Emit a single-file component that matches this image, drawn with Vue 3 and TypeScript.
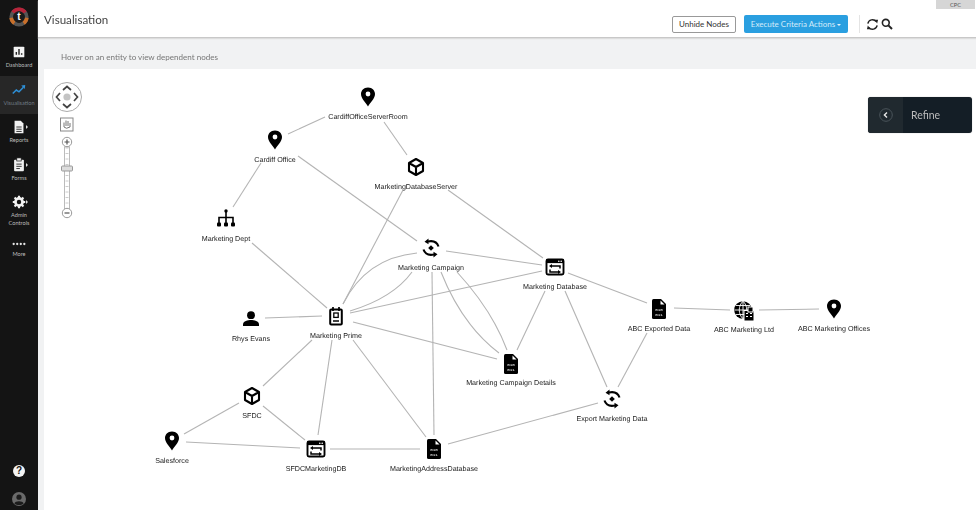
<script setup lang="ts">
// Dependency graph view: node and edge positions are page coordinates, see the svg viewBox
interface GraphNode {
  icon: string;
  x: number;
  y: number;
  label: string;
  ly: number;
}

const nodes: GraphNode[] = [
  { icon: 'pin', x: 368, y: 97, label: 'CardiffOfficeServerRoom', ly: 119 },
  { icon: 'pin', x: 275, y: 140, label: 'Cardiff Office', ly: 162 },
  { icon: 'box', x: 416, y: 167, label: 'MarketingDatabaseServer', ly: 189 },
  { icon: 'org', x: 226, y: 219, label: 'Marketing Dept', ly: 241 },
  { icon: 'cycle', x: 431, y: 248, label: 'Marketing Campaign', ly: 270 },
  { icon: 'window', x: 555, y: 267, label: 'Marketing Database', ly: 289 },
  { icon: 'person', x: 251, y: 319, label: 'Rhys Evans', ly: 341 },
  { icon: 'clip', x: 336, y: 316, label: 'Marketing Prime', ly: 338 },
  { icon: 'file', x: 511, y: 364, label: 'Marketing Campaign Details', ly: 385 },
  { icon: 'file', x: 659, y: 309, label: 'ABC Exported Data', ly: 331 },
  { icon: 'globe', x: 744, y: 311, label: 'ABC Marketing Ltd', ly: 332 },
  { icon: 'pin', x: 834, y: 309, label: 'ABC Marketing Offices', ly: 331 },
  { icon: 'cycle', x: 612, y: 399, label: 'Export Marketing Data', ly: 421 },
  { icon: 'box', x: 252, y: 396, label: 'SFDC', ly: 418 },
  { icon: 'pin', x: 172, y: 441, label: 'Salesforce', ly: 463 },
  { icon: 'window', x: 316, y: 449, label: 'SFDCMarketingDB', ly: 471 },
  { icon: 'file', x: 434, y: 449, label: 'MarketingAddressDatabase', ly: 471 },
];

const edges: string[] = [
  'M325 117L288 134',
  'M384 122L407 155',
  'M261 163L233 207',
  'M298 156L417 241',
  'M403 190L343 304',
  'M448 190L543 258',
  'M252 243L327 308',
  'M446 251L542 265',
  'M350 313L542 271',
  'M343 304Q366 258 417 253',
  'M350 311Q393 298 412 272',
  'M353 322L497 359',
  'M441 272Q462 325 499 353',
  'M457 272Q492 310 507 350',
  'M432 272L434 435',
  'M545 291L517 350',
  'M565 291L607 387',
  'M568 273L647 303',
  'M647 333L618 387',
  'M674 308L730 310',
  'M759 310L819 309',
  'M265 318L322 316',
  'M312 340L263 386',
  'M332 340L318 435',
  'M353 340L426 437',
  'M239 403L184 434',
  'M263 406L305 440',
  'M186 442L300 448',
  'M330 449L420 449',
  'M448 444L598 403',
];

const menu = [
  { name: 'dash', label: ['Dashboard'] },
  { name: 'vis', label: ['Visualisation'], active: true },
  { name: 'reports', label: ['Reports'], caret: true },
  { name: 'forms', label: ['Forms'], caret: true },
  { name: 'admin', label: ['Admin', 'Controls'], caret: true },
  { name: 'more', label: ['More'] },
];

const ruler = Array.from({ length: 11 }, (_, i) => 148 + i * 5.5);
</script>

<template>
  <div class="shell">
    <aside class="side">
      <svg class="logo" width="20" height="20" viewBox="-13 -13 26 26">
        <circle r="10" fill="none" stroke="#555" stroke-width="5" />
        <path d="M-8 -6A10 10 0 0 1 8 -6" fill="none" stroke="#b8233a" stroke-width="5" />
        <path d="M-10 1A10 10 0 0 0 -6 8" fill="none" stroke="#c9702b" stroke-width="5" />
        <path d="M10 1A10 10 0 0 1 6 8" fill="none" stroke="#c9702b" stroke-width="5" />
        <circle r="7.5" fill="#1b1b1b" />
        <text y="4.5" text-anchor="middle" class="logo-t">t</text>
      </svg>
      <nav class="menu">
        <a v-for="m in menu" :key="m.name" class="item" :class="[m.name, { active: m.active }]">
          <span class="glyph">
            <svg width="16" height="16" viewBox="-9 -9 18 18">
              <template v-if="m.name === 'dash'">
                <rect x="-6" y="-6" width="12" height="12" rx="1" fill="#f2f2f2" />
                <path d="M-3 3V0M0 3V-3.5M3 3V1.5" stroke="#222" stroke-width="1.6" />
              </template>
              <template v-else-if="m.name === 'vis'">
                <path d="M-7 4L-3 0L0 2L5 -3" fill="none" stroke="#2e8fd6" stroke-width="1.7" />
                <path d="M2.5 -5L7 -5.5L6.5 -1z" fill="#2e8fd6" />
              </template>
              <template v-else-if="m.name === 'reports'">
                <path d="M-5 -7H2L5 -4V7H-5z" fill="#f2f2f2" />
                <path d="M-3 0H3M-3 2.5H3M-3 5H3" stroke="#222" stroke-width="1" />
              </template>
              <template v-else-if="m.name === 'forms'">
                <rect x="-5.5" y="-6" width="11" height="13" rx="1" fill="#f2f2f2" />
                <rect x="-2.5" y="-8" width="5" height="3.5" fill="#f2f2f2" stroke="#141414" stroke-width=".8" />
                <path d="M-3 -1H3M-3 1.5H3M-3 4H1" stroke="#222" stroke-width="1" />
              </template>
              <template v-else-if="m.name === 'admin'">
                <circle r="4" fill="none" stroke="#f2f2f2" stroke-width="3" />
                <path
                  d="M0 -7V-4.5M0 7V4.5M-7 0H-4.5M7 0H4.5M-5 -5L-3.2 -3.2M5 5L3.2 3.2M-5 5L-3.2 3.2M5 -5L3.2 -3.2"
                  stroke="#f2f2f2"
                  stroke-width="2.4"
                />
              </template>
              <template v-else>
                <circle v-for="d in [-6, -2, 2, 6]" :key="d" :cx="d" cy="0" r="1.3" fill="#e5e5e5" />
              </template>
            </svg>
            <i v-if="m.caret" class="caret"></i>
          </span>
          <span v-for="line in m.label" :key="line" class="item-label">{{ line }}</span>
        </a>
      </nav>
      <div class="side-foot">
        <span class="help">?</span>
        <svg width="14" height="14" viewBox="-7 -7 14 14">
          <circle r="7" fill="#6a6a6a" />
          <circle cy="-1.8" r="2.6" fill="#1c1c1c" />
          <path d="M-4.6 4.6C-4 1.6 4 1.6 4.6 4.6C2 6.6 -2 6.6 -4.6 4.6z" fill="#1c1c1c" />
        </svg>
      </div>
    </aside>

    <main class="main">
      <header class="top">
        <h1>Visualisation</h1>
        <div class="tools">
          <button class="btn">Unhide Nodes</button>
          <button class="btn primary">Execute Criteria Actions <i class="down"></i></button>
          <span class="divider"></span>
          <span class="icons">
            <svg width="13" height="13" viewBox="-7 -7 14 14" fill="none" stroke="#222" stroke-width="1.5">
              <path d="M-5 -1A5 5 0 0 1 4 -3" />
              <path d="M5 1A5 5 0 0 1 -4 3" />
              <path d="M2 -5L6 -5L5 -1z M-2 5L-6 5L-5 1z" fill="#222" stroke="none" />
            </svg>
            <svg width="12" height="12" viewBox="0 0 12 12" fill="none" stroke="#222" stroke-width="1.6">
              <circle cx="4.8" cy="4.8" r="3.4" />
              <path d="M7.4 7.4L11 11" stroke-width="2" />
            </svg>
          </span>
        </div>
      </header>
      <span class="cpc">CPC</span>
      <p class="hint">Hover on an entity to view dependent nodes</p>

      <section class="canvas">
        <svg class="graph" width="932" height="441" viewBox="44 69 932 441">
          <defs>
            <symbol id="pin" viewBox="-10 -10 20 20" overflow="visible">
              <path d="M0 -9.5C-4.5 -9.5 -7 -6.2 -7 -3C-7 1.5 -2.2 5.5 0 9.5C2.2 5.5 7 1.5 7 -3C7 -6.2 4.5 -9.5 0 -9.5z" />
              <circle cy="-3" r="2.4" fill="#fff" />
            </symbol>
            <symbol id="box" viewBox="-10 -10 20 20" overflow="visible">
              <path
                d="M0 -8L7 -4V4L0 8L-7 4V-4zM-7 -4L0 0L7 -4M0 0V8"
                fill="none"
                stroke="#000"
                stroke-width="2.1"
                stroke-linejoin="round"
              />
            </symbol>
            <symbol id="org" viewBox="-10 -10 20 20" overflow="visible">
              <circle cy="-8" r="1.7" />
              <path d="M0 -8V4M-7 4V-1.5H7V4" fill="none" stroke="#000" stroke-width="1.6" />
              <rect x="-9" y="3.5" width="4" height="4" rx="1" />
              <rect x="-2" y="3.5" width="4" height="4" rx="1" />
              <rect x="5" y="3.5" width="4" height="4" rx="1" />
            </symbol>
            <symbol id="cycle" viewBox="-10 -10 20 20" overflow="visible">
              <path d="M0 -2.8L2.8 0L0 2.8L-2.8 0z" />
              <path d="M-3 -6.5C2 -7.5 6 -6 7.5 -1.5M3 6.5C-2 7.5 -6 6 -7.5 1.5" fill="none" stroke="#000" stroke-width="2.1" />
              <path d="M-2.5 -9.5L-6.5 -6.2L-2.5 -3.8zM2.5 9.5L6.5 6.2L2.5 3.8z" />
            </symbol>
            <symbol id="window" viewBox="-10 -10 20 20" overflow="visible">
              <rect x="-8.5" y="-7.5" width="17" height="15" rx="1.5" fill="#fff" stroke="#000" stroke-width="1.9" />
              <rect x="-8.5" y="-7.5" width="17" height="3.6" fill="#000" />
              <circle cx="3.8" cy="-5.8" r=".8" fill="#fff" />
              <circle cx="6.2" cy="-5.8" r=".8" fill="#fff" />
              <path d="M-3.5 -1H5V1.5M3.5 5H-5V2.5" fill="none" stroke="#000" stroke-width="1.5" />
              <path d="M-3 -3L-6 -1L-3 1zM3 3L6 5L3 7z" />
            </symbol>
            <symbol id="clip" viewBox="-10 -10 20 20" overflow="visible">
              <rect x="-5.8" y="-6.5" width="11.6" height="15" rx="1" fill="#fff" stroke="#000" stroke-width="2" />
              <path d="M-3 -9V-5M3 -9V-5" stroke="#000" stroke-width="1.7" />
              <rect x="-2.2" y="-3" width="4.4" height="4.4" fill="none" stroke="#000" stroke-width="1.3" />
              <path d="M-3 5H3" stroke="#000" stroke-width="1.5" />
            </symbol>
            <symbol id="file" viewBox="-10 -10 20 20" overflow="visible">
              <path d="M-7 -8.5Q-7 -10 -5.5 -10H2L7 -5V8.5Q7 10 5.5 10H-5.5Q-7 10 -7 8.5z" />
              <path d="M1.5 -8.5L5.5 -4.6H1.5z" fill="#fff" />
              <text x="0" y="1.5" class="bits">010</text>
              <text x="0" y="7" class="bits">011</text>
            </symbol>
            <symbol id="globe" viewBox="-10 -10 20 20" overflow="visible">
              <circle cx="-1" cy="-1" r="8.8" />
              <path
                d="M-9.5 -1H7.5M-1 -9.8V7.8M-8 -5.5H6M-8 3.5H6M-1 -9.8C-6 -5 -6 3 -1 7.8M-1 -9.8C4 -5 4 3 -1 7.8"
                fill="none"
                stroke="#fff"
                stroke-width=".9"
              />
              <rect x="0" y="-0.5" width="10" height="10.5" fill="#000" stroke="#fff" stroke-width="1" />
              <rect x="4" y="-4" width="5" height="5" fill="#000" stroke="#fff" stroke-width="1" />
              <path d="M2 2.5H4M6 2.5H8M2 5.5H4M6 5.5H8" stroke="#fff" stroke-width="1" />
            </symbol>
            <symbol id="person" viewBox="-10 -10 20 20" overflow="visible">
              <circle cy="-3.8" r="3.9" />
              <path d="M-8 7V5.5C-8 2 -3 1 0 1C3 1 8 2 8 5.5V7z" />
            </symbol>
          </defs>

          <path v-for="(d, i) in edges" :key="i" :d="d" class="edge" />
          <g v-for="n in nodes" :key="n.label">
            <use :href="'#' + n.icon" :x="n.x - 10" :y="n.y - 10" width="20" height="20" />
            <text :x="n.x" :y="n.ly" class="node-label">{{ n.label }}</text>
          </g>
        </svg>

        <svg class="pan" width="34" height="140" viewBox="50 80 34 140">
          <circle cx="67" cy="97" r="14.5" fill="#fff" stroke="#aaa" />
          <circle cx="67" cy="97" r="3.6" fill="#c4c4c4" />
          <path d="M63 90L67 86.5L71 90M63 104L67 107.5L71 104M60 93L56.5 97L60 101M74 93L77.5 97L74 101" fill="none" stroke="#444" stroke-width="1.7" />
          <rect x="60.5" y="118" width="12.5" height="13" fill="#fff" stroke="#888" />
          <path d="M64 127V122.5M66 126V120.5M68 126V121M70 127V123M64 127Q66 129.5 70 127" fill="none" stroke="#777" />
          <rect x="64.5" y="147" width="5" height="62" fill="#fff" stroke="#bbb" />
          <path v-for="t in ruler" :key="t" :d="`M65.5 ${t}H68.5`" stroke="#ccc" />
          <circle cx="67" cy="142" r="4.7" fill="#fff" stroke="#999" />
          <path d="M64.5 142H69.5M67 139.5V144.5" stroke="#555" stroke-width="1.2" />
          <rect x="61.5" y="166" width="11" height="5" rx="1" fill="#ddd" stroke="#999" />
          <circle cx="67" cy="213" r="4.7" fill="#fff" stroke="#999" />
          <path d="M64.5 213H69.5" stroke="#555" stroke-width="1.2" />
        </svg>

        <div class="refine">
          <span class="refine-toggle">
            <svg width="14" height="14" viewBox="-7 -7 14 14">
              <circle r="6.3" fill="none" stroke="#4a545a" />
              <path d="M1 -2.6L-1.6 0L1 2.6" fill="none" stroke="#e6e6e6" stroke-width="1.4" />
            </svg>
          </span>
          <span class="refine-label">Refine</span>
        </div>
      </section>
    </main>
  </div>
</template>

<style scoped>
.shell {
  display: flex;
  width: 976px;
  height: 510px;
  overflow: hidden;
  font-family: Lato, "Liberation Sans", sans-serif;
  color: #333;
  background: #f1f2f3;
}
.side {
  width: 38px;
  flex: none;
  display: flex;
  flex-direction: column;
  background: #141414;
  color: #bdbdbd;
}
.logo {
  align-self: center;
  margin: 7px 0 11px -1px;
}
.logo-t {
  font: 700 13px "Liberation Sans", sans-serif;
  fill: #fff;
}
.menu {
  display: flex;
  flex-direction: column;
}
.item {
  height: 38px;
  box-sizing: border-box;
  padding-top: 5px;
  display: flex;
  flex-direction: column;
  align-items: center;
}
.item.reports,
.item.forms,
.item.admin {
  padding-top: 4px;
}
.item.forms {
  height: 37px;
}
.item.admin {
  height: 46px;
}
.item.more {
  height: 26px;
  padding-top: 3.5px;
}
.item.more .glyph {
  height: 11px;
}
.item.active {
  background: #272727;
}
.glyph {
  position: relative;
  height: 18px;
  display: flex;
  align-items: center;
}
.caret {
  position: absolute;
  left: 15px;
  top: 7px;
  border: 2.5px solid transparent;
  border-left-color: #ddd;
  border-right-width: 0;
}
.item-label {
  font-size: 5.6px;
  line-height: 8px;
  white-space: nowrap;
}
.active .item-label {
  color: #6f7a84;
}
.side-foot {
  margin-top: auto;
  display: flex;
  flex-direction: column;
  align-items: center;
  gap: 15px;
  padding-bottom: 4px;
}
.help {
  width: 12px;
  height: 12px;
  border-radius: 50%;
  background: #f4f4f4;
  color: #141414;
  font: 700 10px/12px "Liberation Sans", sans-serif;
  text-align: center;
}
.main {
  position: relative;
  flex: 1;
  min-width: 0;
  display: flex;
  flex-direction: column;
}
.top {
  height: 38px;
  flex: none;
  box-sizing: border-box;
  display: flex;
  align-items: center;
  justify-content: space-between;
  padding: 0 83px 0 6px;
  background: #fff;
  border-bottom: 1px solid #c8c8c8;
  box-shadow: 0 1px 1px #ddd;
}
h1 {
  margin: 1px 0 0;
  font-size: 11.6px;
  font-weight: 400;
  color: #444;
  will-change: opacity;
}
.tools {
  display: flex;
  align-items: center;
  gap: 8px;
  padding-top: 11px;
}
.btn {
  height: 17px;
  width: 64px;
  padding: 0;
  font: 400 8px Lato, "Liberation Sans", sans-serif;
  color: #333;
  background: #fff;
  border: 1px solid #999;
  border-radius: 2px;
}
.btn.primary {
  height: 18px;
  width: 104px;
  color: #d5ecfa;
  background: #2a9fe0;
  border: 0;
}
.down {
  display: inline-block;
  vertical-align: middle;
  border: 2.5px solid transparent;
  border-top-color: #e6f3fb;
  border-bottom-width: 0;
}
.divider {
  width: 1px;
  height: 18px;
  margin: 0 -2px 0 3px;
  background: #e4e4e4;
}
.icons {
  display: flex;
  align-items: center;
  gap: 2px;
}
.cpc {
  position: absolute;
  top: 0;
  right: 1px;
  width: 39px;
  height: 9px;
  font-size: 5.6px;
  line-height: 9px;
  text-align: center;
  color: #555;
  background: #d6d6d6;
}
.hint {
  flex: none;
  height: 31px;
  margin: 0;
  padding-left: 23px;
  font-size: 8.05px;
  line-height: 38px;
  color: #777;
  will-change: opacity;
}
.canvas {
  position: relative;
  flex: 1;
  margin-left: 6px;
  background: #fff;
}
.graph {
  display: block;
  will-change: opacity;
}
.edge {
  fill: none;
  stroke: #b4b4b4;
  stroke-width: 1.1;
}
.node-label {
  font: 7.15px "Liberation Sans", sans-serif;
  fill: #222;
  text-anchor: middle;
  text-rendering: geometricPrecision;
}
.bits {
  font: 4.2px "Liberation Mono", monospace;
  fill: #fff;
  text-anchor: middle;
}
.pan {
  position: absolute;
  left: 6px;
  top: 11px;
}
.refine {
  position: absolute;
  top: 28px;
  right: 4px;
  width: 104px;
  height: 36px;
  display: flex;
  align-items: center;
  overflow: hidden;
  border-radius: 3px;
  background: #141e26;
  box-shadow: 0 0 1px #999;
}
.refine-toggle {
  width: 35px;
  height: 100%;
  display: flex;
  align-items: center;
  justify-content: center;
  background: #20292f;
}
.refine-label {
  margin-left: 8px;
  font-size: 10.5px;
  color: #bcbcbc;
}
</style>

<style>
html,
body {
  margin: 0;
}
</style>
